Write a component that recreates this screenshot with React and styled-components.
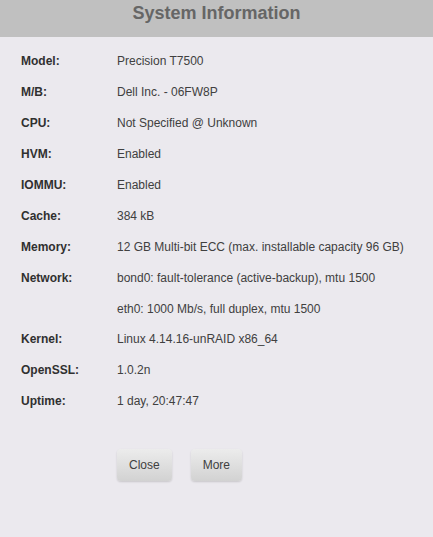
import React from "react";
import styled, { createGlobalStyle } from "styled-components";

const rows = [
  ["Model:", "Precision T7500"],
  ["M/B:", "Dell Inc. - 06FW8P"],
  ["CPU:", "Not Specified @ Unknown"],
  ["HVM:", "Enabled"],
  ["IOMMU:", "Enabled"],
  ["Cache:", "384 kB"],
  ["Memory:", "12 GB Multi-bit ECC (max. installable capacity 96 GB)"],
  ["Network:", "bond0: fault-tolerance (active-backup), mtu 1500"],
  ["", "eth0: 1000 Mb/s, full duplex, mtu 1500"],
  ["Kernel:", "Linux 4.14.16-unRAID x86_64"],
  ["OpenSSL:", "1.0.2n"],
  ["Uptime:", "1 day, 20:47:47"],
];

const App = () => {
  return (
    <>
      <GlobalStyle />
      <StDialog>
        <StHeader>System Information</StHeader>
        <StBody>
          {rows.map(([label, value], i) => (
            <StRow key={i}>
              <StLabel>{label}</StLabel>
              <StValue>{value}</StValue>
            </StRow>
          ))}
        </StBody>
        <StButtons>
          <StButton>Close</StButton>
          <StButton>More</StButton>
        </StButtons>
      </StDialog>
    </>
  );
};

export default App;

const GlobalStyle = createGlobalStyle`
  html, body {
    margin: 0;
    padding: 0;
    background: #ebe9ee;
  }
  body {
    font-family: "Liberation Sans", Arial, sans-serif;
  }
`;

const StDialog = styled.div`
  width: 433px;
  height: 537px;
  background-color: #ebe9ee;
  display: flex;
  flex-direction: column;
`;

const StHeader = styled.div`
  height: 37px;
  background-color: #c0c0c0;
  color: #666;
  font-size: 18px;
  font-weight: bold;
  text-align: center;
  line-height: 26px;
`;

const StBody = styled.div`
  padding-top: 9px;
  display: flex;
  flex-direction: column;
`;

const StRow = styled.div`
  display: flex;
  height: 30.9px;
  align-items: center;
  font-size: 12px;
`;

const StLabel = styled.div`
  width: 96px;
  padding-left: 21px;
  font-weight: bold;
  color: #303030;
`;

const StValue = styled.div`
  color: #404040;
`;

const StButtons = styled.div`
  display: flex;
  gap: 19px;
  padding-left: 117px;
  margin-top: 32px;
`;

const StButton = styled.button`
  font-family: "Liberation Sans", Arial, sans-serif;
  font-size: 12px;
  color: #404040;
  height: 32px;
  padding: 0 12px;
  border: none;
  border-radius: 4px;
  background: linear-gradient(to bottom, #ececec, #d2d2d2);
  box-shadow: 0 1px 2px rgba(0, 0, 0, 0.15);
  cursor: pointer;
`;
